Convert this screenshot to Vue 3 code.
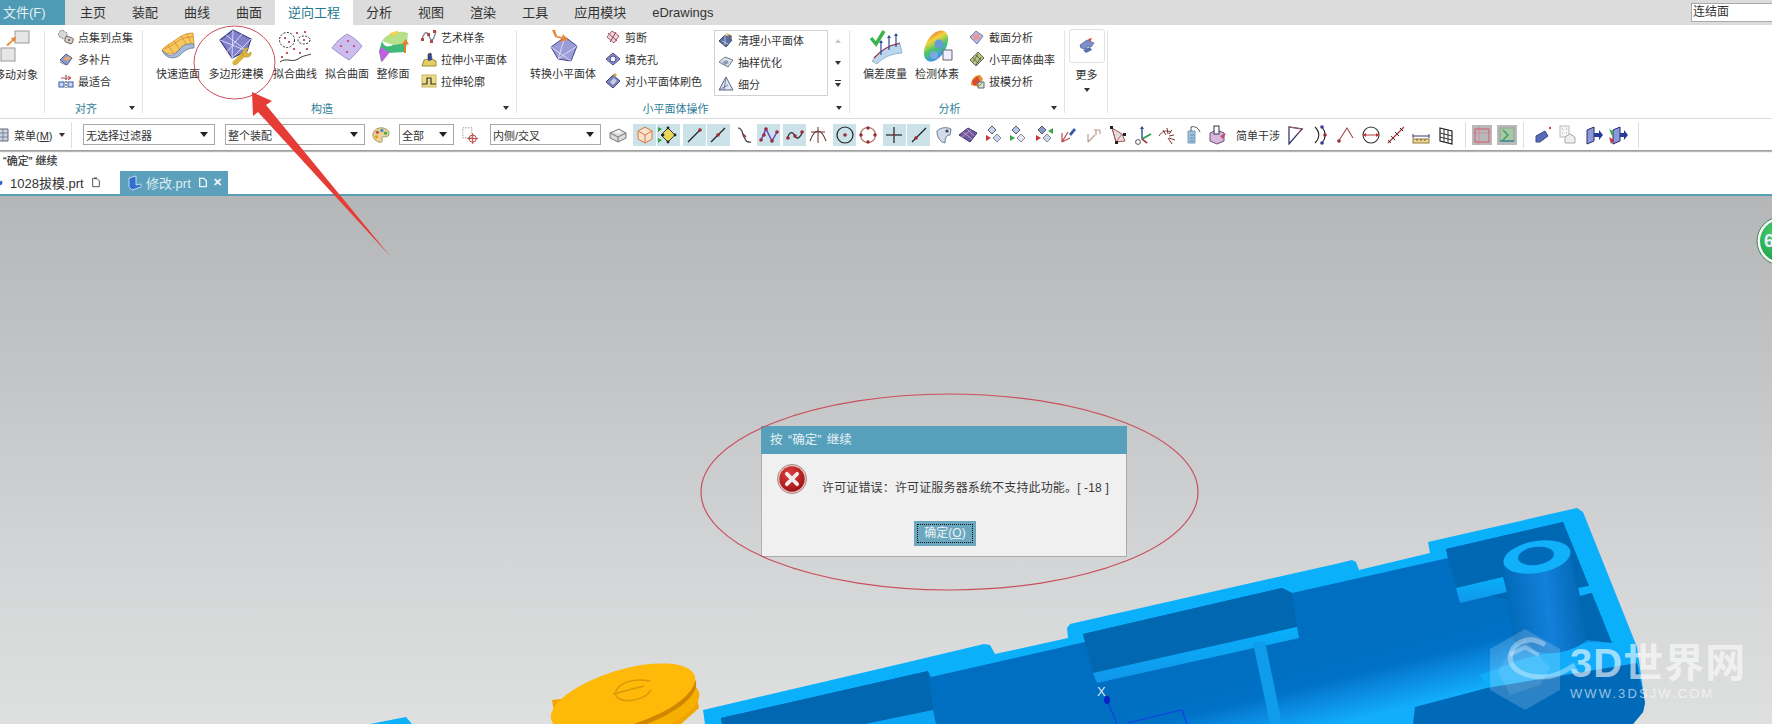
<template>
  <div class="app">
    <!-- tabs -->
    <div class="tabs">
      <div class="file-tab">文件(F)</div>
      <div v-for="t in tabs" :key="t" class="tab" :class="{ active: t === '逆向工程' }">{{ t }}</div>
      <div class="search">连结面</div>
    </div>

    <!-- ribbon -->
    <div class="ribbon">
      <div class="grp" style="width: 45px">
        <div class="grp-body">
          <div class="move">
            <svg class="move-ico" viewBox="0 0 36 34" v-html="art.move"></svg>
            <span class="move-label">移动对象</span>
          </div>
        </div>
      </div>
      <div v-for="g in groups" :key="g.title" class="grp" :style="{ width: g.width + 'px' }">
        <div class="grp-body" :style="{ paddingLeft: g.pad + 'px' }">
          <template v-for="(p, i) in g.parts" :key="i">
            <div v-if="p.big" class="big" :style="{ width: p.w + 'px' }">
              <svg class="big-ico" viewBox="0 0 36 36" v-html="art[p.art]"></svg>
              <span>{{ p.big }}</span>
            </div>
            <div v-else-if="p.rows" class="col" :style="{ marginLeft: p.ml + 'px', width: p.colw + 'px' }">
              <div v-for="r in p.rows" :key="r[0]" class="row">
                <svg class="sm-ico" viewBox="0 0 16 16" v-html="art[r[1]]"></svg>
                <span>{{ r[0] }}</span>
              </div>
            </div>
            <div v-else class="gallery-wrap">
              <div class="gallery">
                <div v-for="r in p.gallery" :key="r[0]" class="row">
                  <svg class="sm-ico" viewBox="0 0 16 16" v-html="art[r[1]]"></svg>
                  <span>{{ r[0] }}</span>
                </div>
              </div>
              <div class="scroller">
                <i class="caret up"></i>
                <i class="caret"></i>
                <i class="caret lined"></i>
              </div>
            </div>
          </template>
        </div>
        <div class="grp-foot">{{ g.title }}<i class="caret foot-caret"></i></div>
      </div>
      <div class="grp more-grp">
        <div class="more-box"><svg viewBox="0 0 20 20" width="20" height="20" v-html="art.more"></svg></div>
        <span class="more-label">更多</span>
        <i class="caret more-caret"></i>
      </div>
    </div>

    <!-- selection bar -->
    <div class="toolbar">
      <svg class="menu-ico" viewBox="0 0 11 16" v-html="art.menu"></svg>
      <span class="menu-text">菜单(<u>M</u>)</span>
      <i class="caret menu-caret"></i>
      <div class="tsep first"></div>
      <div class="select s1"><span>无选择过滤器</span><i class="caret dark"></i></div>
      <div class="select s2"><span>整个装配</span><i class="caret dark"></i></div>
      <svg class="t-ico palette" viewBox="0 0 20 20" v-html="art.palette"></svg>
      <div class="select s3"><span>全部</span><i class="caret dark"></i></div>
      <svg class="t-ico target" viewBox="0 0 20 20" v-html="art.target"></svg>
      <div class="select s4"><span>内侧/交叉</span><i class="caret dark"></i></div>
      <template v-for="b in toolItems" :key="b.id + b.x">
        <div v-if="b.kind === 'sep'" class="tsep" :style="{ marginLeft: b.gap + 'px' }"></div>
        <div v-else-if="b.kind === 'text'" class="tool-text" :style="{ marginLeft: b.gap + 'px', width: b.w + 'px' }">简单干涉</div>
        <div v-else class="tool" :class="{ on: b.on, grey: b.grey }" :style="{ marginLeft: b.gap + 'px' }">
          <svg viewBox="0 0 20 20" width="20" height="20" v-html="tb[b.id]"></svg>
        </div>
      </template>
    </div>

    <div class="cue">“确定” 继续</div>

    <div class="doc-tabs">
      <div class="doc-tab">
        <svg class="part-ico clip" viewBox="0 0 16 16"><path d="M0 4l6-3v10l-6 3z" fill="#2b62c4" /></svg>
        <span>1028拔模.prt</span>
        <svg class="doc-ico" viewBox="0 0 12 14"><path d="M2 2h5l3 3v7H2z" fill="none" stroke="#555" stroke-width="1.2" /><path d="M4 1h3v2H4z" fill="#555" /></svg>
      </div>
      <div class="doc-tab current">
        <svg class="part-ico" viewBox="0 0 16 16"><path d="M3 3l7-2v9l5-1v3l-9 3-3-3z" fill="#2e6fd0" stroke="#dfeaf2" stroke-width=".8" /></svg>
        <span class="cur-name">修改.prt</span>
        <svg class="doc-ico cur" viewBox="0 0 12 14"><path d="M2 2h5l3 3v7H2z" fill="none" stroke="#eef5f8" stroke-width="1.6" /></svg>
        <span class="close">✕</span>
      </div>
    </div>

    <!-- graphics window -->
    <div class="viewport">
      <svg class="model" viewBox="0 196 1772 528" width="1772" height="528">
        <defs>
          <linearGradient id="floor" gradientUnits="userSpaceOnUse" x1="1433" y1="629" x2="1450" y2="697">
            <stop offset="0" stop-color="#006fc2" />
            <stop offset=".35" stop-color="#0072c6" />
            <stop offset=".6" stop-color="#0a88e0" />
            <stop offset="1" stop-color="#12aefc" />
          </linearGradient>
          <linearGradient id="post" gradientUnits="userSpaceOnUse" x1="1505" y1="600" x2="1588" y2="590">
            <stop offset="0" stop-color="#0069b8" />
            <stop offset=".5" stop-color="#1380da" />
            <stop offset="1" stop-color="#0063ad" />
          </linearGradient>
          <linearGradient id="ledge" x1="0" y1="0" x2="0" y2="1">
            <stop offset="0" stop-color="#08b0fb" />
            <stop offset="1" stop-color="#1196ea" />
          </linearGradient>
          <radialGradient id="green" cx=".4" cy=".35" r=".7">
            <stop offset="0" stop-color="#4dcf6c" />
            <stop offset="1" stop-color="#18a048" />
          </radialGradient>
        </defs>

        <!-- small part at the left -->
        <polygon points="370,724 406,717 412,724" fill="#0cb0fb" />

        <!-- knob -->
        <polygon points="552,700 556,724 681,724 699,708 695,684" fill="#f0a500" />
        <ellipse cx="634" cy="712" rx="68" ry="25" transform="rotate(-17 634 712)" fill="#f7b000" />
        <ellipse cx="625" cy="703" rx="74" ry="27" transform="rotate(-17 625 703)" fill="#cf8600" />
        <ellipse cx="623" cy="698" rx="75" ry="28" transform="rotate(-17 623 698)" fill="#ffb909" />
        <path d="M650 681c-16-3-30 1-34 10-3 8 8 11 18 9 9-2 15-6 17-10" fill="none" stroke="#d99a08" stroke-width="1.6" />
        <path d="M613 694l31-8" stroke="#d99a08" stroke-width="1.6" fill="none" />

        <!-- housing -->
        <polygon points="1577,508 1583,512 1637,647 1645,703 1643,712 1633,724 705,724 703,710 900,664 984,644 990,645 995,654 1068,638 1067,628 1070,624 1340,563 1352,560 1356,562 1359,570 1430,553 1428,542" fill="#0bb0fb" />
        <polygon points="1563,522 1612,643 1637,663 1487,688 1415,707 1413,724 722,724 721,718 928,671 931,677 1085,642 1083,634 1282,588 1292,593 1448,558 1446,549" fill="url(#floor)" />
        <polygon points="1446,549 1563,522 1612,643 1587,640 1510,600 1456,588 1448,558" fill="#0067b2" />
        <polygon points="1520,660 1590,642 1612,643 1637,663 1487,688 1480,675" fill="#10acfb" />
        <polygon points="1637,663 1645,703 1643,712 1633,724 1413,724 1415,707 1487,688" fill="#0069b8" />
        <polygon points="1456,588 1503,577 1507,592 1460,603" fill="url(#ledge)" />
        <polygon points="1578,588 1593,585 1595,592 1580,596" fill="#0cb0fb" />

        <!-- bosses along the wall -->
        <polygon points="1083,634 1282,588 1292,593 1297,627 1093,673" fill="#0067b0" />
        <polygon points="1093,673 1297,627 1299,638 1097,683" fill="url(#ledge)" />
        <polygon points="1253,643 1265,641 1282,724 1270,724" fill="#0f9ceb" />
        <polygon points="721,718 928,671 933,710 865,724 722,724" fill="#0067b0" />
        <polygon points="933,710 936,724 865,724" fill="#0aa6f4" />

        <!-- post -->
        <path d="M1503 563L1513 640C1535 660 1570 655 1587 640L1570 553z" fill="url(#post)" />
        <ellipse cx="1537" cy="557" rx="34" ry="16" transform="rotate(-10 1537 557)" fill="#10b0fb" />
        <ellipse cx="1536" cy="556" rx="18" ry="9" transform="rotate(-8 1536 556)" fill="#0069b8" />

        <!-- csys -->
        <path d="M1107 700l10 24M1127 723l55-13 5 14" fill="none" stroke="#1440e0" stroke-width="1.2" />
        <ellipse cx="1107" cy="700" rx="3" ry="4" fill="#0a22c8" />
        <text x="1097" y="696" class="axis">X</text>

        <!-- badge -->
        <circle cx="1781" cy="241" r="24" fill="#f4f7f4" stroke="#40825a" stroke-width="1" />
        <circle cx="1781" cy="241" r="21" fill="url(#green)" />
        <text x="1764" y="247" class="badge">6</text>

        <!-- watermark -->
        <g fill="#fff">
          <polygon points="1525,629 1560,649 1560,690 1525,710 1490,690 1490,649" opacity=".17" />
          <polygon points="1525,640 1510,650 1498,672 1510,695 1540,685 1550,668" opacity=".1" />
          <text x="1570" y="677" class="wm-big" fill-opacity=".62">3D世界网</text>
          <text x="1570" y="698" class="wm-small" fill-opacity=".6">WWW.3DSJW.COM</text>
        </g>
        <path d="M1545 645c-14-10-30-4-34 8-4 14 10 24 32 24 15 0 24-8 32-12" fill="none" stroke="#fff" stroke-opacity=".35" stroke-width="5" />
        <path d="M1510 655l15-8 14 8" fill="none" stroke="#fff" stroke-opacity=".3" stroke-width="4" />
      </svg>

      <!-- message box -->
      <div class="dialog">
        <div class="dlg-title">按 “确定” 继续</div>
        <div class="dlg-body">
          <div class="dlg-msg">
            <svg class="err" viewBox="0 0 32 32">
              <defs>
                <radialGradient id="errRed" cx=".4" cy=".3" r=".75">
                  <stop offset="0" stop-color="#e04040" />
                  <stop offset="1" stop-color="#9c1014" />
                </radialGradient>
              </defs>
              <circle cx="16" cy="16" r="15.5" fill="#e8c8c4" stroke="#a8807c" stroke-width="1" />
              <circle cx="16" cy="16" r="13.5" fill="url(#errRed)" />
              <path d="M10.5 10.5l11 11M21.5 10.5l-11 11" stroke="#f2ecec" stroke-width="4" stroke-linecap="round" />
            </svg>
            <span class="msg">许可证错误：许可证服务器系统不支持此功能。[ -18 ]</span>
          </div>
          <div class="dlg-btn"><span>确定(<u>O</u>)</span></div>
        </div>
      </div>
    </div>

    <!-- hand drawn marks on the screenshot -->
    <svg class="marks" viewBox="0 0 1772 724" width="1772" height="724">
      <ellipse cx="234.5" cy="62.5" rx="40.5" ry="36.5" fill="none" stroke="#c9505e" stroke-width="1" />
      <ellipse cx="949.5" cy="492" rx="248.5" ry="98" fill="none" stroke="#c9505e" stroke-width="1.2" />
      <polygon points="252,92 272,101 266,105 390,256 258,112 253,116" fill="#e53c35" />
    </svg>
  </div>
</template>

<script setup>
const tabs = ["主页", "装配", "曲线", "曲面", "逆向工程", "分析", "视图", "渲染", "工具", "应用模块", "eDrawings"];

const groups = [
  {
    title: "对齐", width: 98, pad: 13,
    parts: [{ ml: 0, colw: 84, rows: [["点集到点集", "points"], ["多补片", "patch"], ["最适合", "bestfit"]] }],
  },
  {
    title: "构造", width: 374, pad: 8,
    parts: [
      { big: "快速造面", art: "quick", w: 54 },
      { big: "多边形建模", art: "polymesh", w: 62 },
      { big: "拟合曲线", art: "fitcurve", w: 56 },
      { big: "拟合曲面", art: "fitsurf", w: 48 },
      { big: "整修面", art: "repair", w: 44 },
      { ml: 6, colw: 90, rows: [["艺术样条", "spline"], ["拉伸小平面体", "extrude"], ["拉伸轮廓", "profile"]] },
    ],
  },
  {
    title: "小平面体操作", width: 333, pad: 8,
    parts: [
      { big: "转换小平面体", art: "convert", w: 76 },
      { ml: 4, colw: 109, rows: [["剪断", "trim"], ["填充孔", "fill"], ["对小平面体刷色", "brush"]] },
      { gallery: [["清理小平面体", "clean"], ["抽样优化", "sample"], ["细分", "subdiv"]] },
    ],
  },
  {
    title: "分析", width: 215, pad: 9,
    parts: [
      { big: "偏差度量", art: "deviation", w: 52 },
      { big: "检测体素", art: "voxel", w: 52 },
      { ml: 6, colw: 90, rows: [["截面分析", "section"], ["小平面体曲率", "curvature"], ["拔模分析", "draft"]] },
    ],
  },
];

const art = {
  move: '<rect x="15" y="1" width="14" height="12" fill="#e6e6e6" stroke="#9a9a9a"/><rect x="1" y="18" width="14" height="13" fill="#e6e6e6" stroke="#9a9a9a"/><path d="M6 15l6-5-1-2 5-1-1 5-2-1-5 5z" fill="#e8893a"/>',
  menu: '<path d="M-3 2h11v12H-3z" fill="#c9d6e4" stroke="#667"/><path d="M-3 6h11M-3 10h11M3 2v12" stroke="#667" stroke-width=".7"/>',
  more: '<path d="M3 9l7-5 7 3-3 4-3-1-2 3-5-1z" fill="#7a90c8" stroke="#4a5a90" stroke-width=".7"/><path d="M6 14l7-3 2 3-6 3z" fill="#5a6fae"/><path d="M11 3l4-1-2 4z" fill="#c44"/>',
  palette: '<path d="M10 2C5 2 1 6 1 10s4 8 8 8c3 0 3-2 2-4s2-2 4-2 4-1 4-4c0-3-4-6-9-6z" fill="#e8d49a" stroke="#9a8a5a"/><circle cx="6" cy="7" r="1.8" fill="#d44"/><circle cx="11" cy="5" r="1.8" fill="#38c"/><circle cx="15" cy="8" r="1.8" fill="#4a4"/><circle cx="5" cy="12" r="1.8" fill="#e90"/>',
  target: '<rect x="2" y="2" width="10" height="11" fill="none" stroke="#888" stroke-dasharray="1.5 1.5"/><circle cx="13" cy="14" r="4" fill="none" stroke="#b33"/><path d="M13 8v12M7 14h12" stroke="#b33"/>',
  quick: '<path d="M2 21c4-5 8-6 12-9s10-8 19-8l1 11c-7 0-11 3-15 6s-11 7-17 0z" fill="#f6c95f" stroke="#c98a2b" stroke-width=".8"/><path d="M8 16l6 9M14 12l6 9M21 7l6 9M27 5l4 9M4 20c6-2 10-5 14-8s9-4 15-4" fill="none" stroke="#d98e33" stroke-width=".9"/><path d="M2 21c5 7 12 7 17 0s10-6 15-6l0 4c-6 0-10 3-14 7s-14 5-18-5z" fill="#a7bad6" stroke="#63799b" stroke-width=".8"/>',
  polymesh: '<path d="M2 11L15 1l18 9-4 12-15 7z" fill="#8282cc" stroke="#3c3c84" stroke-width="1.1"/><path d="M15 1l-1 28M2 11l27 11M33 10L14 29M8 6l21 16M24 5L8 24" fill="none" stroke="#e8e8fa" stroke-width=".8"/><path d="M17 34l9-9" stroke="#d9b33c" stroke-width="5" stroke-linecap="round"/><path d="M25 27c-2-4 1-9 6-8l-3 3 2 3 3-2c1 4-3 7-8 4z" fill="#d9b33c" stroke="#a8862a" stroke-width=".5"/>',
  fitcurve: '<circle cx="10" cy="11" r="7.5" fill="none" stroke="#222" stroke-dasharray="2 1.5"/><ellipse cx="27" cy="11" rx="6" ry="4" fill="none" stroke="#222" stroke-dasharray="2 1.5"/><path d="M3 33c6-5 12 1 18-3s8-3 13-5" fill="none" stroke="#333"/><g fill="#a8304a"><circle cx="8" cy="9" r="1.1"/><circle cx="12" cy="13" r="1.1"/><circle cx="20" cy="4" r="1.1"/><circle cx="28" cy="3" r="1.1"/><circle cx="27" cy="11" r="1.1"/><circle cx="17" cy="20" r="1.1"/><circle cx="10" cy="24" r="1.1"/><circle cx="23" cy="24" r="1.1"/><circle cx="30" cy="20" r="1.1"/><circle cx="5" cy="28" r="1.1"/></g>',
  fitsurf: '<path d="M3 19C7 13 13 8 18 5c6 3 11 7 15 12-4 5-8 10-13 14C14 27 8 23 3 19z" fill="#cdbcee" stroke="#a08fc8"/><g fill="#c0405a"><circle cx="12" cy="17" r="1.1"/><circle cx="19" cy="12" r="1.1"/><circle cx="25" cy="17" r="1.1"/><circle cx="18" cy="23" r="1.1"/></g>',
  repair: '<path d="M7 12C12 4 24 1 33 4l-1 10-14 2z" fill="#b6e08a"/><path d="M7 12c2 5 4 7 11 4l14-2-2 9-17 1-7 9-2-11z" fill="#3fb878"/><path d="M4 22l3-4c3 3 5 5 8 5L7 33z" fill="#c060e0"/><path d="M15 6l8-3" stroke="#f2d24a" stroke-width="3"/><path d="M29 24v-9l-3 1 5-6 3 6-3-1v9z" fill="#e8802a"/>',
  convert: '<path d="M6 18L20 8l12 9-6 15-13-2z" fill="#9c9cd8" stroke="#45458c"/><path d="M20 8l-7 22M6 18l20 14M32 17L13 30" fill="none" stroke="#e8e8fa" stroke-width=".8"/><path d="M7 1l3 7 7 2-2 3 8-2-5-6-1 3-5-1-2-6z" fill="#e8893a"/>',
  deviation: '<path d="M4 9l5 6 8-13" fill="none" stroke="#3ab54a" stroke-width="3.4"/><path d="M5 32C12 22 22 16 33 15l2 9C24 25 16 28 10 35z" fill="#bcd6ee" stroke="#7a9cc0" stroke-width=".7"/><path d="M7 29c8-9 16-13 26-15" fill="none" stroke="#a02a3a" stroke-width="1.2"/><path d="M14 26V13M22 21V8M29 18V6" stroke="#2a4a9a" stroke-width="1.2"/><path d="M12 14l2-3 2 3zM20 9l2-3 2 3zM27 7l2-3 2 3z" fill="#2a4a9a"/>',
  voxel: '<defs><linearGradient id="rb" x1="0" y1="0" x2="1" y2="1"><stop offset="0" stop-color="#e84a3a"/><stop offset=".3" stop-color="#f4d43a"/><stop offset=".55" stop-color="#4ac46a"/><stop offset=".8" stop-color="#3a9ae0"/><stop offset="1" stop-color="#b060d0"/></linearGradient></defs><ellipse cx="17" cy="17" rx="10" ry="17" transform="rotate(30 17 17)" fill="url(#rb)"/><circle cx="20" cy="15" r="4.5" fill="#6a9ad8"/><circle cx="15" cy="26" r="4" fill="#7aa8e0"/><path d="M24 21h9v10h-9z" fill="#eef" stroke="#666"/>',
  points: '<rect x="1" y="2" width="8" height="7" rx="2" fill="#d8d8d8" stroke="#8a8a8a" transform="rotate(30 5 5)" stroke-dasharray="2 1"/><rect x="7" y="8" width="8" height="6" rx="2" fill="#cfcfcf" stroke="#7a6a6a" transform="rotate(20 11 11)"/><circle cx="11" cy="11" r="1" fill="#a33"/>',
  patch: '<path d="M2 9l6-6 6 4-5 7z" fill="#8a9ccf" stroke="#55618f"/><path d="M5 8l5-3 3 2-4 3z" fill="#e8a868"/><path d="M2 11l6 3" stroke="#778"/>',
  bestfit: '<rect x="1" y="9" width="5" height="5" fill="#c8d8f0" stroke="#3a5aa8"/><rect x="10" y="9" width="5" height="5" fill="#c8d8f0" stroke="#3a5aa8"/><path d="M8 2v13" stroke="#333" stroke-dasharray="2 1"/><path d="M3 5h10M10 3l3 2-3 2" fill="none" stroke="#c04040"/>',
  spline: '<path d="M1 10c3-8 5-8 7-3s4 7 7-5" fill="none" stroke="#7a7a8a" stroke-width="1.2"/><g fill="#b04a4a"><rect x="0" y="9" width="3" height="3"/><rect x="6" y="4" width="3" height="3"/><rect x="12" y="1" width="3" height="3"/><rect x="9" y="11" width="3" height="3"/></g>',
  extrude: '<path d="M1 15l2-6 4-1V3l3-1 1 6 4 2v5z" fill="#e6cd62" stroke="#9a8a3a"/><path d="M7 3l3-1 1 7-4 1z" fill="#30469a"/>',
  profile: '<rect x="1" y="2" width="14" height="12" fill="#ecdc88" stroke="#c8b860"/><path d="M1 11h5V5h4v6h5" fill="none" stroke="#333" stroke-width="1.2"/>',
  trim: '<path d="M2 8l5-6 7 5-5 7z" fill="#e8d8e0" stroke="#b05a6a"/><path d="M3 4l9 8M11 3L5 13" stroke="#a04050"/>',
  fill: '<path d="M1 8l7-6 7 6-7 6z" fill="#8a90c8" stroke="#4a4a88"/><circle cx="8" cy="8" r="3" fill="#f0f0f8" stroke="#4a4a88"/>',
  brush: '<path d="M1 9l7-7 7 6-7 7z" fill="#7a80b8" stroke="#44447a"/><path d="M5 9l4-4 3 3-4 4z" fill="#c8c8e8"/><path d="M8 2l2-2 2 2-2 2z" fill="#d8a040"/>',
  clean: '<path d="M1 9l6-6 7 5-6 7z" fill="#5a6ea0" stroke="#3a4a70"/><path d="M4 9l6 3M7 3v10" stroke="#dde" stroke-width=".7"/><path d="M8 1l5 2-2 3z" fill="#d8a040"/><circle cx="12" cy="5" r="2" fill="#667"/>',
  sample: '<path d="M1 8l6-5 8 3-5 7z" fill="#dfe4ec" stroke="#6a7a8a"/><path d="M4 8l5-2 2 3-4 2z" fill="#8a9cb8"/>',
  subdiv: '<path d="M8 1l7 13H1z" fill="#dde4f0" stroke="#5a6a8a"/><path d="M8 1L6 14M1 14l9-5" stroke="#5a6a8a" stroke-width=".8"/>',
  section: '<path d="M1 8l6-6 7 5-6 8z" fill="#b8b8dc" stroke="#7a7aa8"/><path d="M4 6l6-1 1 5-6 1z" fill="#e49a9a"/>',
  curvature: '<path d="M1 9l8-8 6 6-8 8z" fill="#bcc48a" stroke="#5a6a4a"/><path d="M4 7l5 5M7 4l5 5M9 3l-5 8M12 6l-5 8" stroke="#3a4a2a" stroke-width=".7"/>',
  draft: '<path d="M2 12C2 6 6 2 11 2l3 4-4 8z" fill="#e8902a"/><path d="M3 8l6-5 2 6-6 4z" fill="#d84a3a"/><path d="M9 9h6v6H9z" fill="#ddd" stroke="#666"/><path d="M10 13l3-3" stroke="#4a4"/>',
};

const line = (x1, y1, x2, y2, c = "#222") => `<path d="M${x1} ${y1}L${x2} ${y2}" stroke="${c}" stroke-width="1.2" fill="none"/>`;
const dot = (x, y, c = "#a02a3a", r = 1.8) => `<circle cx="${x}" cy="${y}" r="${r}" fill="${c}"/>`;
const diamonds = (a, b, tri) =>
  `<path d="M8 1l4 4-4 4-4-4z" fill="${a}" stroke="#556"/><path d="M13 9l4 4-4 4-4-4z" fill="${b}" stroke="#889"/><path d="M2 10l5 3-5 3z" fill="${tri}"/>`;

const tb = {
  cubeGray: '<path d="M2 8l9-4 7 4v5l-8 4-8-4z" fill="#dcdcdc" stroke="#777"/><path d="M2 8l8 4 8-4M10 12v5" fill="none" stroke="#777"/><path d="M6 7l5-2 3 2-4 2z" fill="#f4f4f4"/>',
  cubeOrange: '<path d="M3 6l7-4 7 4v8l-7 4-7-4z" fill="#fae3cc" stroke="#d9743a"/><path d="M3 6l7 4 7-4M10 10v8" fill="none" stroke="#d9743a"/>',
  pts: '<path d="M10 3l7 7-7 7-7-7z" fill="#ecd65a" stroke="#333"/><circle cx="10" cy="3" r="1.4" fill="#222"/><circle cx="17" cy="10" r="1.4" fill="#222"/><circle cx="10" cy="17" r="1.4" fill="#222"/><circle cx="5" cy="10" r="1.4" fill="#222"/><path d="M0 2l4 2-4 3zM0 13l4 2-4 3z" fill="#2aa84a"/>',
  lineEnd: line(3, 17, 16, 4) + dot(15, 5),
  lineMid: line(3, 17, 17, 3) + dot(10, 10),
  scurve: '<path d="M4 3c5 0 4 6 6 9s2 6 7 5" fill="none" stroke="#333" stroke-width="1.2"/><path d="M9 9l3 3" stroke="#a02a3a" stroke-width="1.4"/>',
  poly: '<path d="M2 15L7 4l6 12 5-9" fill="none" stroke="#6a3ac0" stroke-width="1.4"/>' + dot(2, 15) + dot(7, 4) + dot(13, 16) + dot(18, 7) + dot(5, 10),
  wave: '<path d="M2 14c3-9 6-7 8-3s5 2 8-5" fill="none" stroke="#333" stroke-width="1.3"/>' + dot(3, 13) + dot(10, 11) + dot(17, 7),
  tangent: '<path d="M2 16C5 8 8 6 10 6s5 2 8 10" fill="none" stroke="#633" stroke-width="1.1"/><path d="M10 2v16M3 7h14" stroke="#633" stroke-width="1"/>',
  circleDot: '<circle cx="10" cy="10" r="8" fill="none" stroke="#222" stroke-width="1.2"/>' + dot(10, 10),
  circleRing: '<circle cx="10" cy="10" r="7.5" fill="none" stroke="#a86a5a" stroke-width="1.2"/>' + dot(3, 10) + dot(17, 10) + dot(10, 3) + dot(10, 17),
  plus: line(10, 2, 10, 18) + line(2, 10, 18, 10) + dot(10, 10, "#a02a3a", 1.2),
  lineDot: line(3, 17, 17, 3) + dot(7, 13),
  surf: '<path d="M3 6c4-4 10-4 14-2l-1 6c-3 0-5 2-5 8-5-1-8-6-8-12z" fill="#d2dce8" stroke="#6a7a9a"/><circle cx="13" cy="6" r="1.6" fill="#445"/>',
  meshPatch: '<path d="M1 10l9-7 9 5-7 9z" fill="#6a5aa8" stroke="#3a3a70"/><path d="M5 7l9 7M9 4l7 7M4 12l9-7" stroke="#e8a0b0" stroke-width=".8"/>',
  dia1: diamonds("#c8d4ec", "#c8d4ec", "#c83a3a"),
  dia2: diamonds("#b8c8e8", "#e8e8f0", "#3aa84a"),
  dia3: diamonds("#8a9cc8", "#c8d4ec", "#c83a3a") + '<path d="M19 3l-5 3 5 3z" fill="#3aa84a"/>',
  axisBlue: '<path d="M4 17V8M4 17l8-4M4 17l6-10" stroke="#b84a4a" stroke-width="1.2"/><path d="M11 9l5-6 2 2-5 6z" fill="#3a5aa8"/>',
  axisFaint: '<path d="M5 17V9M5 17l7-7M11 5h6M13 5v5M17 5v4" stroke="#c09a8a" stroke-width="1.2" fill="none"/>',
  cage: '<path d="M4 3l10 6 3 7-9 1z" fill="#e8dcd8" stroke="#a05a5a"/><path d="M4 3l4 14M14 9L8 17" stroke="#a05a5a" stroke-width=".8"/><g fill="#222"><rect x="2" y="1" width="3" height="3"/><rect x="15" y="8" width="3" height="3"/><rect x="7" y="16" width="3" height="3"/></g>',
  csys: '<path d="M8 14V2M8 14l9-5M8 14l5 4" stroke="#2a4a9a" stroke-width="1.4"/><path d="M8 14l9-5" stroke="#3aa84a" stroke-width="1.6"/><path d="M8 14l5 4" stroke="#b33" stroke-width="1.6"/><path d="M6 4l2-3 2 3z" fill="#2a4a9a"/><circle cx="4" cy="17" r="2.4" fill="none" stroke="#555"/>',
  rays: '<path d="M2 11c3-5 7-6 12-4M6 5l3 5M10 3l1 6M15 5l-3 4M17 10l-5 1M18 15l-6-2M15 19l-4-6" fill="none" stroke="#7a3a3a" stroke-width="1"/>',
  clip: '<path d="M5 6h7v12H5z" fill="#9cc2dc" stroke="#7a9ab8"/><path d="M7 10h4M7 13h4M7 16h4" stroke="#5a7a98" stroke-width=".7"/><path d="M8 6V2c3-1 7 0 9 5" fill="none" stroke="#555"/>',
  boxPin: '<path d="M3 8l7-3 7 3v8l-7 3-7-3z" fill="#d8b8dc" stroke="#6a4a7a"/><rect x="7" y="1" width="5" height="8" fill="#fff" stroke="#334"/><path d="M13 11l6-3-3 6z" fill="#c84a6a"/>',
  tri: '<path d="M3 2v17l13-15z" fill="none" stroke="#2a2a6a" stroke-width="1.2"/><path d="M3 2l14 2-7 6" fill="none" stroke="#a05a6a"/>',
  arcs: '<path d="M3 2c5 5 5 11 0 16M10 2c4 5 4 11 0 16" fill="none" stroke="#222" stroke-width="1.1"/>' + dot(10, 2, "#3a3a9a") + dot(13, 10, "#a02a3a") + dot(10, 18, "#3a3a9a"),
  arcLine: '<path d="M3 17L12 3l6 10" fill="none" stroke="#a04a4a" stroke-width="1.1"/>' + dot(4, 16),
  circleH: '<circle cx="10" cy="10" r="8" fill="none" stroke="#333" stroke-width="1.1"/><path d="M2 10h16" stroke="#b33"/><path d="M2 10l3-2v4zM18 10l-3-2v4z" fill="#b33"/>',
  measure: '<path d="M2 18L18 2" stroke="#b33" stroke-width="1.2"/><path d="M5 11l4 4M9 7l4 4M2 15l3 3M14 3l3 3" stroke="#334" stroke-width="1"/>',
  ruler: '<path d="M2 9v4M18 9v4M2 11h16" stroke="#3a3a6a" stroke-width="1"/><rect x="2" y="14" width="16" height="4" fill="#e8d89a" stroke="#9a7a3a"/><path d="M6 14v2M10 14v2M14 14v2" stroke="#7a5a2a"/>',
  grid: '<path d="M4 3l12 3v13L4 16z" fill="#fff" stroke="#222" stroke-width="1.2"/><path d="M8 4v13M12 5v13M4 8l12 3M4 12l12 3" stroke="#222" stroke-width=".9"/>',
  redBox: '<rect x="3" y="4" width="14" height="13" fill="none" stroke="#d46a7a" stroke-width="1.2"/><path d="M7 1v19M1 8h18" stroke="#d46a7a" stroke-width=".5"/>',
  greenBox: '<rect x="3" y="3" width="14" height="13" fill="#a8c8a8" stroke="#8aa88a"/><path d="M6 5l5 5-5 5" fill="none" stroke="#3a9a5a" stroke-width="1.4"/><path d="M3 16h14" stroke="#3a8a9a" stroke-width="1.5"/>',
  sprayBlue: '<path d="M2 17V11l9-5 3 5-8 6z" fill="#5a68b8" stroke="#3a4a88"/><circle cx="16" cy="3" r="1.2" fill="#c84a4a"/>',
  ghost: '<rect x="3" y="1" width="9" height="11" fill="#f4f4f4" stroke="#bbb"/><path d="M8 12l5-3 5 3v6H8z" fill="#eee" stroke="#aaa"/><path d="M5 4h1M9 4h1M5 8h1M9 8h1" stroke="#aaa"/>',
  export: '<path d="M3 5l7-3v14l-7 3z" fill="#8a9ad8" stroke="#2a2a6a"/><path d="M10 8h5V5l4 5-4 5v-3h-5z" fill="#2a3a9a"/>',
  export2: '<path d="M5 5l7-3v14l-7 3z" fill="#8a9ad8" stroke="#2a2a6a"/><path d="M12 8h4V5l4 5-4 5v-3h-4z" fill="#2a3a9a"/><path d="M1 4l5 3-2 4z" fill="#3aa84a"/><path d="M1 12l5 3-3 4z" fill="#c83a3a"/>',
};

const toolList = [
  ["cubeGray", 617], ["cubeOrange", 643.5, 1], ["pts", 667, 1], ["lineEnd", 693.5, 1], ["lineMid", 717, 1], ["scurve", 743],
  ["poly", 767.5, 1], ["wave", 793.5, 1], ["tangent", 817], ["circleDot", 843.5, 1], ["circleRing", 867], ["plus", 893, 1],
  ["lineDot", 917.5, 1], ["surf", 943], ["meshPatch", 967], ["dia1", 993], ["dia2", 1017], ["dia3", 1043], ["axisBlue", 1067],
  ["axisFaint", 1092], ["cage", 1117], ["csys", 1143], ["rays", 1166], ["clip", 1192], ["boxPin", 1216],
  ["text", 1257], ["tri", 1295], ["arcs", 1321], ["arcLine", 1344], ["circleH", 1370], ["measure", 1395], ["ruler", 1420], ["grid", 1445],
  ["sep", 1464], ["redBox", 1481, 2], ["greenBox", 1506, 2], ["sep", 1522],
  ["sprayBlue", 1543], ["ghost", 1566], ["export", 1593], ["export2", 1617], ["sep", 1637],
];

// each item is placed after the previous one, the gap comes from its centre x
let right = 600;
const toolItems = toolList.map(([id, x, flag]) => {
  const kind = id === "sep" ? "sep" : id === "text" ? "text" : "tool";
  const w = kind === "sep" ? 1 : kind === "text" ? 46 : 23;
  const gap = x - w / 2 - right;
  right = x + w / 2;
  return { id, x, kind, w, gap, on: flag === 1, grey: flag === 2 };
});
</script>

<style scoped>
.app {
  position: relative;
  width: 1772px;
  height: 724px;
  overflow: hidden;
  display: flex;
  flex-direction: column;
  background: #fff;
  color: #333;
  font-family: "Liberation Sans", "Noto Sans CJK SC", sans-serif;
  font-size: 11px;
}

.tabs {
  height: 25px;
  flex: none;
  display: flex;
  align-items: center;
  background: #dcdcdc;
  font-size: 13px;
  position: relative;
}
.file-tab {
  width: 65px;
  height: 25px;
  line-height: 25px;
  padding-left: 3px;
  box-sizing: border-box;
  background: #4f9ab5;
  color: #e4f0f4;
}
.tab {
  padding: 0 13px;
  height: 25px;
  line-height: 25px;
  white-space: nowrap;
}
.tab:nth-child(2) {
  margin-left: 2px;
}
.tab.active {
  background: #fff;
  color: #24788f;
}
.search {
  margin-left: auto;
  width: 81px;
  height: 19px;
  box-sizing: border-box;
  border: 1px solid #aaa;
  border-right: 0;
  background: #fff;
  font-size: 12px;
  line-height: 17px;
  padding-left: 1px;
}

.ribbon {
  height: 94px;
  flex: none;
  display: flex;
  box-sizing: border-box;
  border-bottom: 1px solid #dcdcdc;
}
.grp {
  position: relative;
  flex: none;
  display: flex;
  flex-direction: column;
  box-sizing: border-box;
}
.grp::after {
  content: "";
  position: absolute;
  right: 0;
  top: 5px;
  bottom: 5px;
  width: 1px;
  background: #e4e4e4;
}
.grp-body {
  height: 73px;
  display: flex;
  padding-top: 1px;
  box-sizing: border-box;
}
.grp-foot {
  position: relative;
  height: 20px;
  padding-right: 16px;
  display: flex;
  align-items: center;
  justify-content: center;
  color: #2d8098;
}
.foot-caret {
  position: absolute;
  right: 8px;
  top: 8px;
}

.move {
  display: flex;
  flex-direction: column;
  white-space: nowrap;
}
.move-ico {
  width: 36px;
  height: 34px;
  margin-top: 4px;
}
.move-label {
  margin-left: -6px;
  margin-top: 2px;
}

.big {
  flex: none;
  display: flex;
  flex-direction: column;
  align-items: center;
  white-space: nowrap;
  padding-top: 3px;
  box-sizing: border-box;
}
.big-ico {
  width: 36px;
  height: 36px;
}
.col {
  flex: none;
  display: flex;
  flex-direction: column;
}
.row {
  height: 22px;
  display: flex;
  align-items: center;
  gap: 4px;
  white-space: nowrap;
}
.sm-ico {
  width: 16px;
  height: 16px;
  flex: none;
}
.gallery-wrap {
  display: flex;
  margin-top: 4px;
}
.gallery {
  width: 114px;
  height: 66px;
  box-sizing: border-box;
  border: 1px solid #d2d2d2;
  padding-left: 3px;
}
.gallery .row:first-child {
  margin-top: -2px;
}
.scroller {
  width: 19px;
  height: 66px;
  display: flex;
  flex-direction: column;
  align-items: center;
  justify-content: space-around;
}

.caret {
  display: block;
  width: 0;
  height: 0;
  border-left: 3px solid transparent;
  border-right: 3px solid transparent;
  border-top: 4px solid #333;
}
.caret.up {
  border-top: 0;
  border-bottom: 4px solid #c8c8c8;
}
.caret.lined {
  position: relative;
}
.caret.lined::before {
  content: "";
  position: absolute;
  left: -3px;
  top: -7px;
  width: 6px;
  height: 1px;
  background: #333;
}
.caret.dark {
  border-left-width: 4px;
  border-right-width: 4px;
  border-top-width: 5px;
  border-top-color: #222;
  margin-left: auto;
  margin-right: 6px;
}

.more-grp {
  width: 43px;
  align-items: center;
}
.more-box {
  width: 36px;
  height: 34px;
  margin-top: 4px;
  box-sizing: border-box;
  border: 1px solid #e0e0e0;
  border-radius: 3px;
  display: flex;
  align-items: center;
  justify-content: center;
}
.more-label {
  margin-top: 3px;
}
.more-caret {
  margin-top: 6px;
}

.toolbar {
  height: 32px;
  flex: none;
  display: flex;
  align-items: center;
  box-sizing: border-box;
  border-bottom: 1px solid #a0a0a0;
  box-shadow: 0 1px 1px #b8b8b8;
}
.menu-ico {
  width: 11px;
  height: 16px;
  margin-right: 3px;
  overflow: hidden;
}
.menu-text {
  white-space: nowrap;
  width: 42px;
}
.menu-caret {
  margin-left: 3px;
}
.tsep {
  width: 1px;
  height: 26px;
  flex: none;
  background: #dedede;
}
.tsep.first {
  margin-left: 6px;
}
.select {
  height: 21px;
  flex: none;
  box-sizing: border-box;
  border: 1px solid #a8a8a8;
  background: #fff;
  display: flex;
  align-items: center;
  padding-left: 2px;
  white-space: nowrap;
}
.s1 { width: 132px; margin-left: 11px; }
.s2 { width: 140px; margin-left: 10px; }
.s3 { width: 55px; margin-left: 10px; }
.s4 { width: 111px; margin-left: 11px; }
.t-ico {
  width: 18px;
  height: 18px;
  flex: none;
}
.palette { margin-left: 7px; margin-right: -1px; }
.target { margin-left: 7px; }
.tool {
  width: 23px;
  height: 22px;
  flex: none;
  display: flex;
  align-items: center;
  justify-content: center;
}
.tool svg {
  overflow: hidden;
}
.tool.on {
  background: #cbe2e8;
}
.tool.grey svg {
  background: #b9b9bb;
}
.tool-text {
  flex: none;
  font-size: 11px;
  text-align: center;
  white-space: nowrap;
}

.cue {
  height: 20px;
  flex: none;
  line-height: 20px;
  padding-left: 3px;
  -webkit-text-stroke: 0.2px #333;
}

.doc-tabs {
  height: 25px;
  flex: none;
  box-sizing: border-box;
  border-bottom: 2px solid #5a9fb8;
  display: flex;
  align-items: stretch;
  font-size: 13px;
}
.doc-tab {
  display: flex;
  align-items: center;
  white-space: nowrap;
}
.doc-tab:first-child {
  width: 120px;
}
.part-ico {
  width: 16px;
  height: 16px;
  flex: none;
}
.part-ico.clip {
  width: 6px;
  margin-right: 4px;
}
.doc-ico {
  width: 10px;
  height: 13px;
  margin-left: 7px;
}
.doc-tab.current {
  width: 108px;
  background: #5ca0bb;
  color: #dcecf1;
  padding-left: 6px;
  box-sizing: border-box;
}
.cur-name {
  margin-left: 4px;
}
.close {
  margin-left: 5px;
  font-size: 11px;
  font-weight: bold;
  color: #f2f7f9;
}

.viewport {
  position: relative;
  flex: 1;
  background: linear-gradient(#b5b6b8 0%, #c4c5c6 35%, #d4d5d6 70%, #dedfdf 100%);
}
.model {
  position: absolute;
  left: 0;
  top: 0;
}
.axis {
  font: 13px "Liberation Sans", sans-serif;
  fill: #dfe6ee;
}
.badge {
  font: bold 18px "Liberation Sans", sans-serif;
  fill: #eef;
}
.wm-big {
  font: bold 40px "Liberation Sans", "Noto Sans CJK SC", sans-serif;
  letter-spacing: 1px;
}
.wm-small {
  font: 13px "Liberation Sans", sans-serif;
  letter-spacing: 2.1px;
}

.dialog {
  position: absolute;
  left: 761px;
  top: 230px;
  width: 366px;
  height: 131px;
  box-sizing: border-box;
  background: #f0f0f0;
  border-right: 1px solid #a8a8a8;
  border-bottom: 1px solid #a8a8a8;
  border-left: 1px solid #b0b0b0;
  display: flex;
  flex-direction: column;
}
.dlg-title {
  height: 28px;
  line-height: 28px;
  margin: 0 -1px 0 -1px;
  padding-left: 9px;
  background: #57a0bb;
  color: #e6f1f5;
  font-size: 12.5px;
  word-spacing: 2px;
}
.dlg-body {
  flex: 1;
  display: flex;
  flex-direction: column;
  align-items: center;
}
.dlg-msg {
  align-self: stretch;
  height: 67px;
  display: flex;
  align-items: flex-start;
  padding: 9px 0 0 15px;
  box-sizing: border-box;
}
.err {
  width: 30px;
  height: 32px;
  flex: none;
}
.msg {
  margin: 15px 0 0 15px;
  font-size: 12px;
  letter-spacing: 0.15px;
  white-space: nowrap;
  color: #3a3a3a;
}
.dlg-btn {
  width: 62px;
  height: 25px;
  padding: 3px;
  box-sizing: border-box;
  background: #6ba8bf;
  color: #e8f2f5;
  font-size: 12px;
  margin-left: 2px;
}
.dlg-btn span {
  display: block;
  height: 19px;
  line-height: 17px;
  text-align: center;
  box-sizing: border-box;
  border: 1px dotted #111;
}

.marks {
  position: absolute;
  left: 0;
  top: 0;
  pointer-events: none;
}
</style>

<style>
html, body {
  margin: 0;
  overflow: hidden;
}
</style>
